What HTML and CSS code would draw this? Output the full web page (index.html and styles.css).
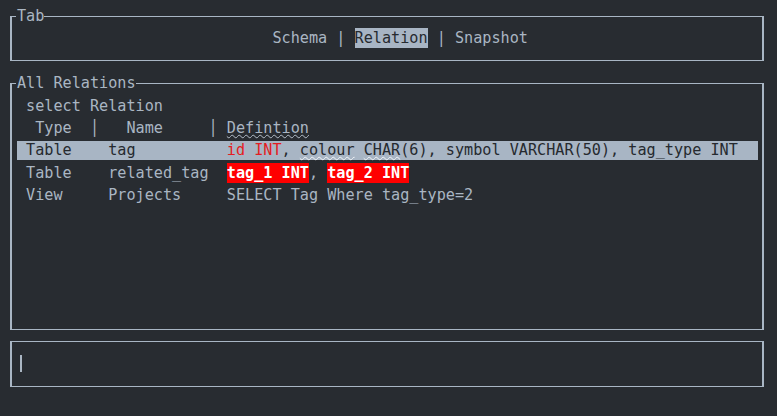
FILE: index.html
```html
<!DOCTYPE html>
<html lang="en">
<head>
<meta charset="utf-8">
<title>Relations</title>
<link rel="stylesheet" href="styles.css">
</head>
<body>
<main class="screen">
  <fieldset class="box">
    <legend class="box-title">Tab</legend>
    <div class="line tabs"><span class="tab">Schema</span> | <span class="tab active">Relation</span> | <span class="tab">Snapshot</span></div>
  </fieldset>

  <fieldset class="box">
    <legend class="box-title">All Relations</legend>
    <div class="list-body">
      <div class="line"> select Relation</div>
      <div class="trow thead">
        <span class="cell">  Type  │ </span>
        <span class="cell">  Name     │ </span>
        <span class="cell"><span class="typo">Defintion</span></span>
      </div>
      <div class="trow selected">
        <span class="cell"> Table</span>
        <span class="cell">tag</span>
        <span class="cell"><span class="red">id INT</span>, <span class="typo light">colour</span> <span class="typo light">CHAR</span>(6), symbol VARCHAR(50), tag_type INT</span>
      </div>
      <div class="trow">
        <span class="cell"> Table</span>
        <span class="cell">related_tag</span>
        <span class="cell"><span class="err">tag_1 INT</span>, <span class="err">tag_2 INT</span></span>
      </div>
      <div class="trow">
        <span class="cell"> View</span>
        <span class="cell">Projects</span>
        <span class="cell">SELECT Tag Where tag_type=2</span>
      </div>
    </div>
  </fieldset>

  <fieldset class="box input-box">
    <div class="line input-line"><span class="cursor"></span></div>
  </fieldset>
</main>
</body>
</html>
```

FILE: styles.css
```css
:root {
  --bg: #282c31;
  --fg: #aab6c3;
  --line: #a9b6c4;
  --sel-bg: #a8b5c4;
  --sel-fg: #262a2f;
  --red: #e41c22;
  --err-bg: #ff0000;
  --row: 22.4px;
  --half: 10.7px;
}

* { box-sizing: border-box; }

html, body {
  margin: 0;
  background: var(--bg);
}

body {
  width: 777px;
  height: 416px;
  overflow: hidden;
  color: var(--fg);
  font-family: "DejaVu Sans Mono", "Liberation Mono", monospace;
  font-size: 15.16px;
  line-height: var(--row);
}

.screen {
  padding-top: 5px;
}

.box {
  margin: 0 13px var(--half) 10px;
  padding: 0 4px var(--half);
  border-style: solid;
  border-color: var(--line);
  border-width: 1px 2px;
  min-width: 0;
}

.box-title {
  padding: 0 0 0 1px;
  margin: 0;
  line-height: var(--row);
  color: var(--fg);
}

.line {
  height: var(--row);
  padding-left: 1px;
  white-space: pre;
}

.tabs {
  padding-left: calc(28ch + 1px);
}

.tab.active {
  background: var(--sel-bg);
  color: var(--sel-fg);
  padding: 1px 0;
}

.list-body {
  height: calc(var(--row) * 10);
}

.trow {
  display: grid;
  grid-template-columns: 10ch 13ch 1fr;
  height: var(--row);
  padding-left: 1px;
}

.cell {
  white-space: pre;
}

.trow.selected {
  padding-top: 1.5px;
  padding-bottom: 1.5px;
  line-height: 19.4px;
  background: var(--sel-bg);
  background-clip: content-box;
  color: var(--sel-fg);
}

.typo {
  text-decoration-line: underline;
  text-decoration-style: wavy;
  text-decoration-color: #b4bec9;
  text-decoration-thickness: 1px;
  text-underline-offset: 1px;
}

.typo.light {
  text-decoration-color: #f2f5f8;
}

.red {
  color: var(--red);
}

.err {
  background: var(--err-bg);
  color: #ffffff;
  font-weight: bold;
  padding: 1px 0;
}

.input-box {
  margin-top: var(--half);
  padding-top: var(--half);
}

.input-line {
  display: flex;
  align-items: center;
  padding-left: 0;
}

.cursor {
  display: block;
  width: 2px;
  height: 17px;
  margin-left: 4px;
  background: var(--fg);
}
```
